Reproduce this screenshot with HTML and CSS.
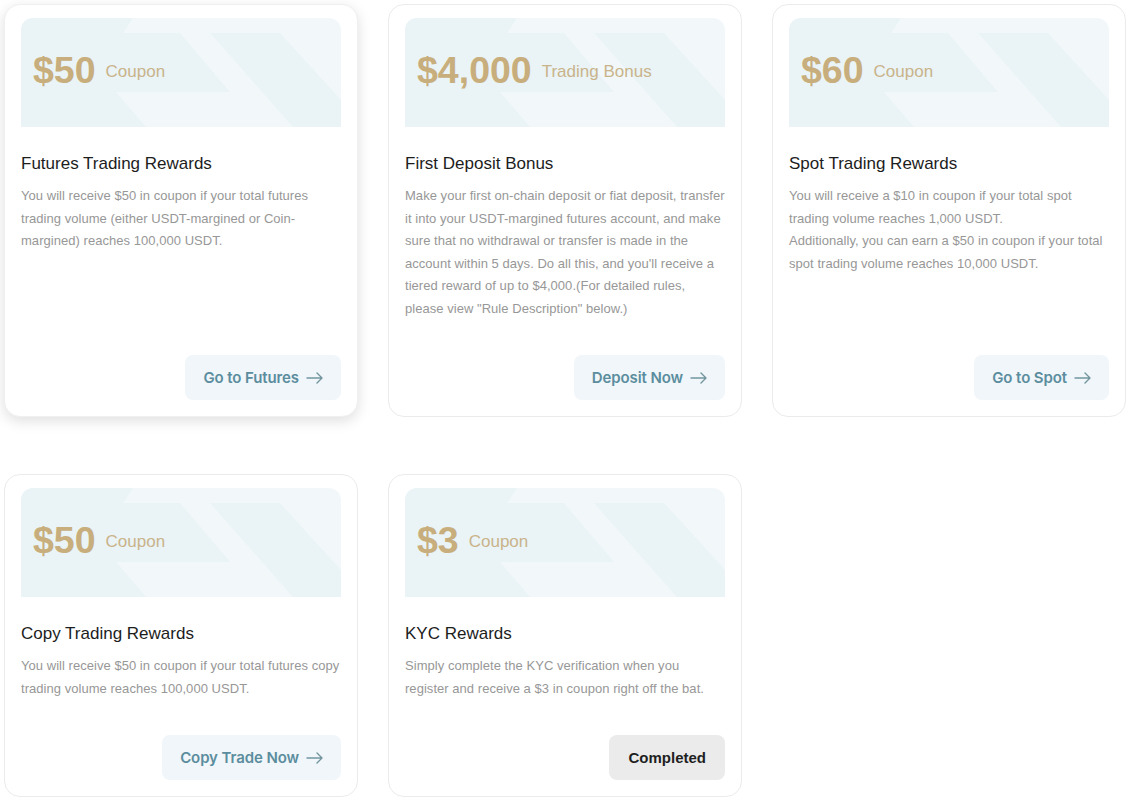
FILE: index.html
```html
<!DOCTYPE html>
<html>
<head>
<meta charset="utf-8">
<link rel="stylesheet" href="styles.css">
</head>
<body>
<div class="grid">

  <div class="card card-hover">
    <div class="banner">
      <svg class="banner-bg" viewBox="0 0 320 109" preserveAspectRatio="none"><polygon points="0,0 112,0 102,15 159,15 209,74 95,74 125,109 0,109"/><polygon points="189,15 259,15 320,82 320,109 272,109"/></svg>
      <span class="amount">$50</span><span class="unit">Coupon</span>
    </div>
    <h3 class="title">Futures Trading Rewards</h3>
    <p class="desc">You will receive $50 in coupon if your total futures trading volume (either USDT-margined or Coin-margined) reaches 100,000 USDT.</p>
    <div class="actions"><a class="btn">Go to Futures<svg class="arrow" viewBox="0 0 18 12"><path d="M1 6h15M11 1l5 5-5 5"/></svg></a></div>
  </div>

  <div class="card">
    <div class="banner">
      <svg class="banner-bg" viewBox="0 0 320 109" preserveAspectRatio="none"><polygon points="0,0 112,0 102,15 159,15 209,74 95,74 125,109 0,109"/><polygon points="189,15 259,15 320,82 320,109 272,109"/></svg>
      <span class="amount">$4,000</span><span class="unit">Trading Bonus</span>
    </div>
    <h3 class="title">First Deposit Bonus</h3>
    <p class="desc">Make your first on-chain deposit or fiat deposit, transfer it into your USDT-margined futures account, and make sure that no withdrawal or transfer is made in the account within 5 days. Do all this, and you'll receive a tiered reward of up to $4,000.(For detailed rules, please view "Rule Description" below.)</p>
    <div class="actions"><a class="btn">Deposit Now<svg class="arrow" viewBox="0 0 18 12"><path d="M1 6h15M11 1l5 5-5 5"/></svg></a></div>
  </div>

  <div class="card">
    <div class="banner">
      <svg class="banner-bg" viewBox="0 0 320 109" preserveAspectRatio="none"><polygon points="0,0 112,0 102,15 159,15 209,74 95,74 125,109 0,109"/><polygon points="189,15 259,15 320,82 320,109 272,109"/></svg>
      <span class="amount">$60</span><span class="unit">Coupon</span>
    </div>
    <h3 class="title">Spot Trading Rewards</h3>
    <p class="desc">You will receive a $10 in coupon if your total spot trading volume reaches 1,000 USDT.<br>Additionally, you can earn a $50 in coupon if your total spot trading volume reaches 10,000 USDT.</p>
    <div class="actions"><a class="btn">Go to Spot<svg class="arrow" viewBox="0 0 18 12"><path d="M1 6h15M11 1l5 5-5 5"/></svg></a></div>
  </div>

  <div class="card">
    <div class="banner">
      <svg class="banner-bg" viewBox="0 0 320 109" preserveAspectRatio="none"><polygon points="0,0 112,0 102,15 159,15 209,74 95,74 125,109 0,109"/><polygon points="189,15 259,15 320,82 320,109 272,109"/></svg>
      <span class="amount">$50</span><span class="unit">Coupon</span>
    </div>
    <h3 class="title">Copy Trading Rewards</h3>
    <p class="desc">You will receive $50 in coupon if your total futures copy trading volume reaches 100,000 USDT.</p>
    <div class="actions"><a class="btn">Copy Trade Now<svg class="arrow" viewBox="0 0 18 12"><path d="M1 6h15M11 1l5 5-5 5"/></svg></a></div>
  </div>

  <div class="card">
    <div class="banner">
      <svg class="banner-bg" viewBox="0 0 320 109" preserveAspectRatio="none"><polygon points="0,0 112,0 102,15 159,15 209,74 95,74 125,109 0,109"/><polygon points="189,15 259,15 320,82 320,109 272,109"/></svg>
      <span class="amount">$3</span><span class="unit">Coupon</span>
    </div>
    <h3 class="title">KYC Rewards</h3>
    <p class="desc">Simply complete the KYC verification when you register and receive a $3 in coupon right off the bat.</p>
    <div class="actions"><a class="btn btn-done">Completed</a></div>
  </div>

</div>
</body>
</html>
```

FILE: styles.css
```css
* { box-sizing: border-box; }

html, body {
  margin: 0;
  padding: 0;
  background: #ffffff;
}

body {
  font-family: "Liberation Sans", Arial, sans-serif;
}

.grid {
  display: grid;
  grid-template-columns: repeat(3, 354px);
  column-gap: 30px;
  row-gap: 57px;
  padding: 4px 0 0 4px;
}

.card {
  display: flex;
  flex-direction: column;
  border: 1px solid #ebebeb;
  border-radius: 16px;
  padding: 13px 16px 16px;
  background: #fff;
}

.card-hover {
  box-shadow: 0 4px 14px rgba(0, 0, 0, 0.13);
  border-color: #f0f0f0;
}

.banner {
  position: relative;
  height: 109px;
  border-radius: 12px 12px 0 0;
  background: #f2f8fa;
  overflow: hidden;
  display: flex;
  align-items: center;
  padding: 0 0 3px 12px;
}

.banner-bg {
  position: absolute;
  left: 0;
  top: 0;
  width: 100%;
  height: 100%;
  fill: #eaf3f6;
}

.amount {
  position: relative;
  font-size: 37.5px;
  font-weight: 700;
  color: #c7ae7c;
  line-height: 1;
}

.unit {
  position: relative;
  margin-left: 10px;
  font-size: 17px;
  color: #c9b48a;
  margin-top: 1px;
}

.title {
  margin: 25px 0 0;
  font-size: 17px;
  line-height: 24px;
  font-weight: 400;
  color: #1d1d1d;
}

.desc {
  margin: 9px 0 0;
  font-size: 13px;
  line-height: 22.5px;
  letter-spacing: 0.04px;
  color: #979797;
}

.actions {
  margin-top: auto;
  padding-top: 35px;
  display: flex;
  justify-content: flex-end;
}

.btn {
  display: inline-flex;
  align-items: center;
  height: 45px;
  padding: 0 17px 0 18px;
  border-radius: 8px;
  background: #f0f6f9;
  color: #5b8d9e;
  font-family: Inter, "Liberation Sans", sans-serif;
  font-weight: 600;
  font-size: 15px;
  letter-spacing: -0.1px;
  text-decoration: none;
}

.arrow {
  width: 18px;
  height: 12px;
  margin-left: 7px;
  fill: none;
  stroke: #72959f;
  stroke-width: 1.4;
  stroke-linecap: round;
  stroke-linejoin: round;
}

.btn-done {
  background: #ebebeb;
  color: #1f1f1f;
  font-family: "Liberation Sans", Arial, sans-serif;
  font-weight: 700;
  letter-spacing: 0;
  padding: 0 19px;
}
```
